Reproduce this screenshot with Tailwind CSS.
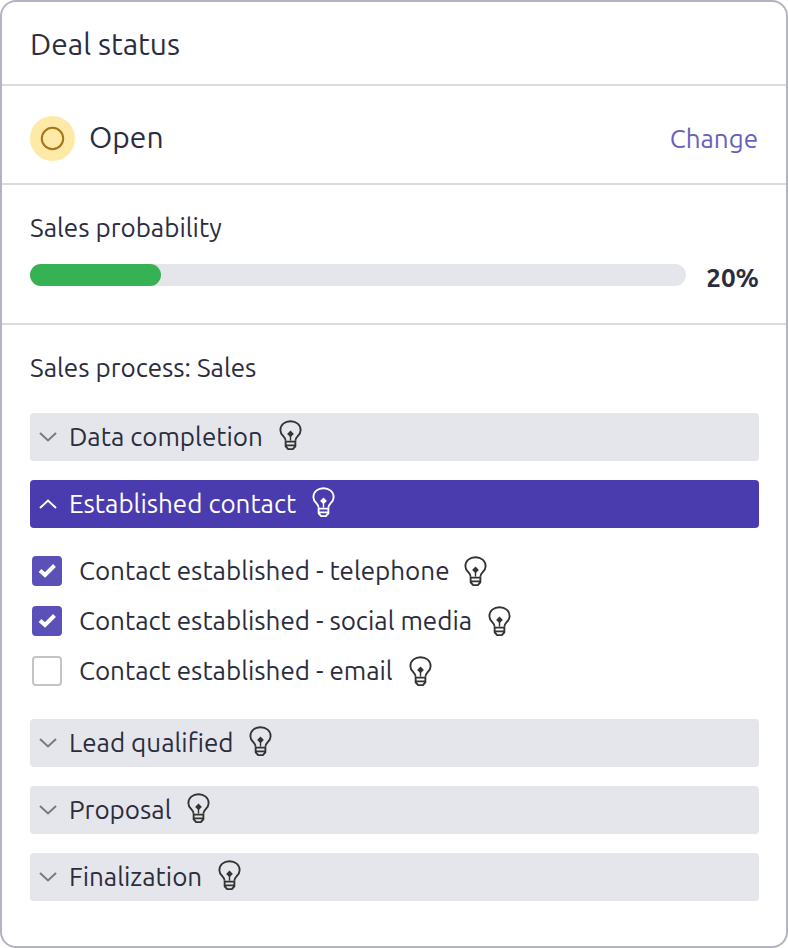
<!DOCTYPE html>
<html lang="en">
<head>
    <meta charset="UTF-8">
    <meta name="viewport" content="width=device-width, initial-scale=1.0">
    <title>Deal status</title>
    <script src="https://cdn.jsdelivr.net/npm/@tailwindcss/browser@4"></script>
</head>
<body class="bg-white font-[Ubuntu,'Noto_Sans',sans-serif] text-[26px] leading-8 text-[#2b2d3e]">
    <!-- shared icons -->
    <svg class="hidden">
        <symbol id="bulb" viewBox="0 0 24 32">
            <g fill="none" stroke="currentColor" stroke-width="2" stroke-linejoin="round">
                <path d="M6.8 22C6.8 17.8 1.2 16.5 1.2 10.8C1.2 5 6 1.3 12 1.3S22.8 5 22.8 10.8C22.8 16.5 17.2 17.8 17.2 22"/>
                <path d="M6 23H18M7 27H17M6.8 22V28L9.5 31H14.5L17.2 28V22"/>
                <path d="M12 14V22" stroke-width="1.5"/>
            </g>
            <path d="M12 11.2L15.6 14.8L12 18.4L8.4 14.8Z" fill="currentColor"/>
        </symbol>
        <symbol id="chevron-down" viewBox="0 0 18 12">
            <path d="M1 2L9 9.5L17 2" fill="none" stroke="currentColor" stroke-width="2"/>
        </symbol>
        <symbol id="chevron-up" viewBox="0 0 18 12">
            <path d="M1 10L9 2.5L17 10" fill="none" stroke="currentColor" stroke-width="2"/>
        </symbol>
    </svg>

    <main class="min-h-screen border-2 border-[#b3b4bd] rounded-2xl">
        <header class="px-7 pt-[26px] pb-6 border-b-2 border-[#dcdce0]">
            <h1 class="text-[30px]">Deal status</h1>
        </header>

        <section class="flex items-center justify-between px-7 pt-[30px] pb-[22px] border-b-2 border-[#dcdce0]">
            <div class="flex items-center gap-3.5">
                <svg class="size-[45px]" viewBox="0 0 45 45">
                    <circle cx="22.5" cy="22.5" r="22.5" fill="#ffe9a6"/>
                    <circle cx="22.5" cy="22.5" r="10.7" fill="none" stroke="#a8741a" stroke-width="2"/>
                </svg>
                <span class="pb-1 text-[30px]">Open</span>
            </div>
            <a href="#" class="text-[#6860bd]">Change</a>
        </section>

        <section class="pl-7 pr-[27px] pt-[27px] pb-[29px] border-b-2 border-[#dcdce0]">
            <h2>Sales probability</h2>
            <div class="flex items-start gap-5 mt-[15px]">
                <div class="flex-1 mt-[5px] h-[22px] rounded-full bg-[#e5e6eb]">
                    <div class="h-full rounded-full bg-[#36b153]" style="width: 20%"></div>
                </div>
                <span class="pt-[3px] text-right font-bold">20%</span>
            </div>
        </section>

        <section class="pl-7 pr-[27px] pt-[27px] pb-10">
            <h2>Sales process: Sales</h2>
            <div class="flex flex-col gap-[19px] mt-[29px]">
                <button class="flex items-center h-12 px-[9px] rounded bg-[#e5e6eb]">
                    <svg class="w-[18px] h-3 mr-3 text-[#777986]"><use href="#chevron-down"/></svg>
                    Data completion
                    <svg class="w-[23px] h-[30px] ml-4 mb-1 text-[#333]"><use href="#bulb"/></svg>
                </button>
                <button class="flex items-center h-12 px-[9px] rounded bg-[#4a3baf] text-white">
                    <svg class="w-[18px] h-3 mr-3"><use href="#chevron-up"/></svg>
                    Established contact
                    <svg class="w-[23px] h-[30px] ml-4 mb-1"><use href="#bulb"/></svg>
                </button>

                <ul class="flex flex-col gap-[18px] pt-2 pb-[13px] pl-0.5">
                    <li>
                        <label class="flex items-center">
                            <span class="grid mr-[17px]">
                                <input type="checkbox" checked class="peer col-start-1 row-start-1 appearance-none size-[30px] rounded border-2 border-[#c4c4c8] checked:border-[#5a50b8] checked:bg-[#5a50b8]">
                                <svg class="hidden peer-checked:block col-start-1 row-start-1 size-[30px] pointer-events-none" viewBox="0 0 30 30"><path d="M8 14.5L13 19L22.5 9.5" fill="none" stroke="#fff" stroke-width="4"/></svg>
                            </span>
                            Contact established - telephone
                            <svg class="w-[23px] h-[30px] ml-3.5 text-[#333]"><use href="#bulb"/></svg>
                        </label>
                    </li>
                    <li>
                        <label class="flex items-center">
                            <span class="grid mr-[17px]">
                                <input type="checkbox" checked class="peer col-start-1 row-start-1 appearance-none size-[30px] rounded border-2 border-[#c4c4c8] checked:border-[#5a50b8] checked:bg-[#5a50b8]">
                                <svg class="hidden peer-checked:block col-start-1 row-start-1 size-[30px] pointer-events-none" viewBox="0 0 30 30"><path d="M8 14.5L13 19L22.5 9.5" fill="none" stroke="#fff" stroke-width="4"/></svg>
                            </span>
                            Contact established - social media
                            <svg class="w-[23px] h-[30px] ml-4 text-[#333]"><use href="#bulb"/></svg>
                        </label>
                    </li>
                    <li>
                        <label class="flex items-center">
                            <span class="grid mr-[17px]">
                                <input type="checkbox" class="peer col-start-1 row-start-1 appearance-none size-[30px] rounded border-2 border-[#c4c4c8] checked:border-[#5a50b8] checked:bg-[#5a50b8]">
                                <svg class="hidden peer-checked:block col-start-1 row-start-1 size-[30px] pointer-events-none" viewBox="0 0 30 30"><path d="M8 14.5L13 19L22.5 9.5" fill="none" stroke="#fff" stroke-width="4"/></svg>
                            </span>
                            Contact established - email
                            <svg class="w-[23px] h-[30px] ml-4 text-[#333]"><use href="#bulb"/></svg>
                        </label>
                    </li>
                </ul>

                <button class="flex items-center h-12 px-[9px] rounded bg-[#e5e6eb]">
                    <svg class="w-[18px] h-3 mr-3 text-[#777986]"><use href="#chevron-down"/></svg>
                    Lead qualified
                    <svg class="w-[23px] h-[30px] ml-4 mb-1 text-[#333]"><use href="#bulb"/></svg>
                </button>
                <button class="flex items-center h-12 px-[9px] rounded bg-[#e5e6eb]">
                    <svg class="w-[18px] h-3 mr-3 text-[#777986]"><use href="#chevron-down"/></svg>
                    Proposal
                    <svg class="w-[23px] h-[30px] ml-4 mb-1 text-[#333]"><use href="#bulb"/></svg>
                </button>
                <button class="flex items-center h-12 px-[9px] rounded bg-[#e5e6eb]">
                    <svg class="w-[18px] h-3 mr-3 text-[#777986]"><use href="#chevron-down"/></svg>
                    Finalization
                    <svg class="w-[23px] h-[30px] ml-4 mb-1 text-[#333]"><use href="#bulb"/></svg>
                </button>
            </div>
        </section>
    </main>
</body>
</html>
